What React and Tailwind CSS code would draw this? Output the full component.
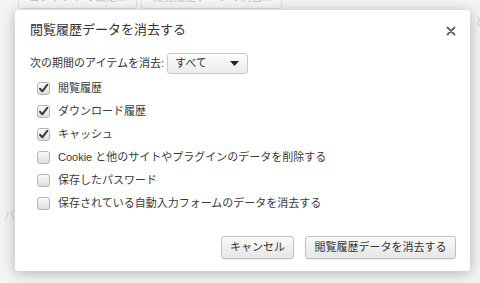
import React from 'react'

const items = [
  { label: '閲覧履歴', checked: true },
  { label: 'ダウンロード履歴', checked: true },
  { label: 'キャッシュ', checked: true },
  { label: 'Cookie と他のサイトやプラグインのデータを削除する', checked: false },
  { label: '保存したパスワード', checked: false },
  { label: '保存されている自動入力フォームのデータを消去する', checked: false },
]

function Checkbox({ checked }) {
  return (
    <span className="w-[13px] h-[13px] rounded-[3px] border border-[#b5b5b5] bg-gradient-to-b from-[#fbfbfb] to-[#dedede] flex items-center justify-center shrink-0">
      {checked && (
        <svg width="11" height="11" viewBox="0 0 11 11">
          <path d="M2 5.8 L4.3 8.3 L9.2 1.8" fill="none" stroke="#3a3a3a" strokeWidth="2" strokeLinecap="round" strokeLinejoin="round" />
        </svg>
      )}
    </span>
  )
}

export default function App() {
  return (
    <div
      className="relative w-[480px] h-[283px] overflow-hidden bg-[#f4f4f4] text-[#333]"
      style={{ fontFamily: '"Liberation Sans", "Noto Sans CJK JP", sans-serif' }}
    >
      {/* page behind the dialog */}
      <div className="flex gap-[4px] pl-[18px] mt-[-12px] text-[11px] text-[#c8c8c8]">
        <div className="h-[21px] px-[10px] border border-[#e0e0e0] rounded-[3px] bg-[#f7f7f7] flex items-end pb-[3px]">コンテンツの設定...</div>
        <div className="h-[21px] px-[10px] border border-[#e0e0e0] rounded-[3px] bg-[#f7f7f7] flex items-end pb-[3px]">閲覧履歴データの消去...</div>
      </div>
      <div className="absolute right-[-6px] top-[14px] text-[11px] text-[#cfcfcf]">と</div>
      <div className="absolute left-[4px] top-[208px] text-[11px] text-[#cfcfcf]">パ</div>

      {/* dialog */}
      <div className="absolute left-[15px] top-[10px] w-[455px] h-[261px] bg-white rounded-[3px] shadow-[0_2px_14px_rgba(0,0,0,0.28)] flex flex-col">
        <div className="flex items-center justify-between pl-[15px] pr-[14px] pt-[10px]">
          <h1 className="text-[13px] text-[#333] leading-[20px]">閲覧履歴データを消去する</h1>
          <svg width="10" height="10" viewBox="0 0 10 10" className="mt-[1px]">
            <path d="M1.5 1.5 L8.5 8.5 M8.5 1.5 L1.5 8.5" stroke="#666" strokeWidth="1.9" strokeLinecap="round" />
          </svg>
        </div>

        <div className="flex items-center pl-[15px] mt-[13px] text-[11px]">
          <span>次の期間のアイテムを消去:</span>
          <div className="ml-[3px] w-[81px] h-[21px] border border-[#c8c8c8] rounded-[3px] bg-gradient-to-b from-[#fdfdfd] to-[#ececec] flex items-center justify-between pl-[7px] pr-[8px]">
            <span>すべて</span>
            <svg width="9" height="5" viewBox="0 0 9 5">
              <path d="M0 0 L9 0 L4.5 5 Z" fill="#222" />
            </svg>
          </div>
        </div>

        <div className="flex flex-col gap-[10px] pl-[22px] mt-[8px] text-[11px]">
          {items.map((item) => (
            <div key={item.label} className="flex items-center gap-[8px] h-[13px]">
              <Checkbox checked={item.checked} />
              <span className="leading-[13px] text-[#3a3a3a]">{item.label}</span>
            </div>
          ))}
        </div>

        <div className="flex justify-end gap-[11px] pr-[14px] mt-auto mb-[12px] text-[11px]">
          <button className="w-[73px] h-[23px] border border-[#c0c0c0] rounded-[3px] bg-gradient-to-b from-[#fafafa] to-[#e6e6e6] shadow-[0_1px_0_rgba(0,0,0,0.06)] text-[#333]">
            キャンセル
          </button>
          <button className="w-[151px] h-[23px] border border-[#c0c0c0] rounded-[3px] bg-gradient-to-b from-[#fafafa] to-[#e6e6e6] shadow-[0_1px_0_rgba(0,0,0,0.06)] text-[#333]">
            閲覧履歴データを消去する
          </button>
        </div>
      </div>
    </div>
  )
}
